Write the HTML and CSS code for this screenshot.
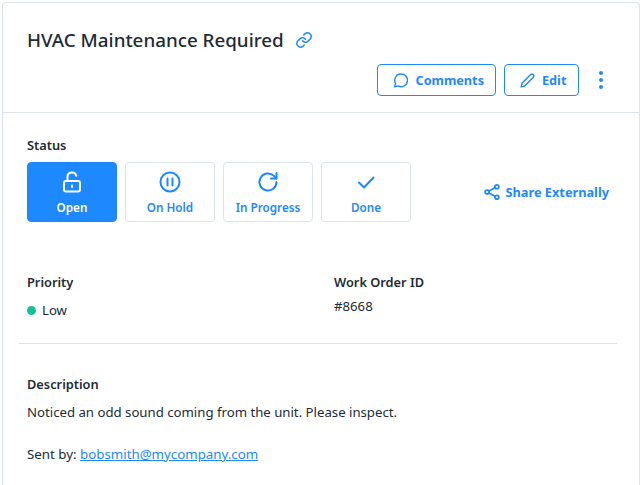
FILE: index.html
```html
<!DOCTYPE html>
<html lang="en">
<head>
<meta charset="utf-8">
<title>Work Order</title>
<link rel="stylesheet" href="styles.css">
</head>
<body>
<main class="card">
  <header class="head">
    <div class="title-row">
      <h1 class="title">HVAC Maintenance Required</h1>
      <svg class="link-icon" viewBox="0 0 24 24" width="18" height="18" fill="none" stroke="currentColor" stroke-width="2" stroke-linecap="round" stroke-linejoin="round"><path d="M10 13a5 5 0 0 0 7.5.5l3-3a5 5 0 0 0-7-7l-1.7 1.7"/><path d="M14 11a5 5 0 0 0-7.5-.5l-3 3a5 5 0 0 0 7 7l1.7-1.7"/></svg>
    </div>
    <div class="actions">
      <button class="btn"><svg viewBox="0 0 24 24" width="17" height="17" fill="none" stroke="currentColor" stroke-width="2" stroke-linecap="round" stroke-linejoin="round"><path d="M3.5 21l1.6-4.6A9 9 0 1 1 8.4 19.6z"/></svg>Comments</button>
      <button class="btn btn-edit"><svg viewBox="0 0 24 24" width="17" height="17" fill="none" stroke="currentColor" stroke-width="2" stroke-linecap="round" stroke-linejoin="round"><path d="M3 21l1.2-5L16.5 3.7a2.6 2.6 0 0 1 3.8 3.8L8 19.8z"/></svg>Edit</button>
      <button class="more" aria-label="More"><span></span><span></span><span></span></button>
    </div>
  </header>
  <section class="body">
    <div class="label">Status</div>
    <div class="status-row">
      <div class="statuses">
        <button class="status active"><svg viewBox="0 0 24 24" width="24" height="24" fill="none" stroke="currentColor" stroke-width="2" stroke-linecap="round" stroke-linejoin="round"><rect x="4" y="11" width="16" height="10.5" rx="2"/><path d="M7.5 11V7a4.5 4.5 0 0 1 8.8-1.3"/><path d="M12 15.5v1.5"/></svg>Open</button>
        <button class="status"><svg viewBox="0 0 24 24" width="24" height="24" fill="none" stroke="currentColor" stroke-width="2" stroke-linecap="round"><circle cx="12" cy="12" r="9.5"/><path d="M9.5 8.5v7M14.5 8.5v7"/></svg>On Hold</button>
        <button class="status"><svg viewBox="0 0 24 24" width="24" height="24" fill="none" stroke="currentColor" stroke-width="2" stroke-linecap="round" stroke-linejoin="round"><path d="M20.5 12a8.5 8.5 0 1 1-2.6-6.1L20.5 8.5"/><path d="M20.5 3v5.5H15"/></svg>In Progress</button>
        <button class="status"><svg viewBox="0 0 24 24" width="24" height="24" fill="none" stroke="currentColor" stroke-width="2" stroke-linecap="round" stroke-linejoin="round"><path d="M5 12.5l5 5L19.5 7.5"/></svg>Done</button>
      </div>
      <a class="share"><svg viewBox="0 0 24 24" width="18" height="18" fill="none" stroke="currentColor" stroke-width="2.3"><circle cx="18.5" cy="5" r="2.6"/><circle cx="5.5" cy="12" r="2.6"/><circle cx="18.5" cy="19" r="2.6"/><path d="M8 10.7l8.2-4.4M8 13.3l8.2 4.4"/></svg>Share Externally</a>
    </div>
    <div class="meta">
      <div class="meta-col">
        <div class="label">Priority</div>
        <div class="priority"><span class="dot"></span>Low</div>
      </div>
      <div class="meta-col">
        <div class="label">Work Order ID</div>
        <div class="value">#8668</div>
      </div>
    </div>
  </section>
  <hr class="rule">
  <section class="desc">
    <div class="label">Description</div>
    <p class="text">Noticed an odd sound coming from the unit. Please inspect.</p>
    <p class="text sent">Sent by: <a class="mail" href="#">bobsmith@mycompany.com</a></p>
  </section>
</main>
</body>
</html>
```
FILE: styles.css
```css
* { box-sizing: border-box; }
html, body { margin: 0; padding: 0; background: #fff; }
body {
  padding: 2px 3px 0 2px;
  height: 485px;
  overflow: hidden;
  font-family: "Noto Sans", "Open Sans", sans-serif;
  font-size: 13.2px;
  color: #212b36;
}
button { font-family: inherit; cursor: pointer; }
.card {
  border: 1px solid #dce3ea;
  border-bottom: 0;
  border-radius: 4px 4px 0 0;
  height: 483px;
}
.head {
  height: 110px;
  padding: 23px 24px 0;
  border-bottom: 1px solid #dce3ea;
}
.title-row { display: flex; align-items: center; gap: 11px; height: 28px; }
.title { margin: 0; font-size: 18.8px; font-weight: 500; line-height: 28px; color: #212b36; }
.link-icon { color: #1e88ff; }
.actions { display: flex; justify-content: flex-end; align-items: center; gap: 8px; margin-top: 10px; margin-right: 8px; }
.btn {
  display: flex; align-items: center; justify-content: flex-start; gap: 6px;
  height: 32px; padding: 0 11px 0 14px;
  background: #fff; border: 1px solid #1e88ff; border-radius: 4px;
  color: #1e88ff; font-size: 12.7px; font-weight: 700;
}
.btn-edit { width: 75px; }
.more { display: flex; flex-direction: column; gap: 3px; margin-left: 8px; padding: 0 4px; background: none; border: 0; }
.more span { width: 4px; height: 4px; border-radius: 50%; background: #1e88ff; }
.body { padding: 23px 24px 0; }
.label { font-size: 12.8px; font-weight: 600; line-height: 18px; color: #212b36; }
.status-row { display: flex; align-items: center; justify-content: space-between; margin-top: 8px; padding-right: 6px; }
.statuses { display: flex; gap: 8px; }
.status {
  display: flex; flex-direction: column; align-items: center; justify-content: center; gap: 5px;
  width: 90px; height: 60px; padding: 0;
  background: #fff; border: 1px solid #dce3ea; border-radius: 4px;
  color: #1e88ff; font-size: 11.7px; font-weight: 600; line-height: 16px;
}
.status.active { background: #1e88ff; border-color: #1e88ff; color: #fff; }
.share { display: flex; align-items: center; gap: 5px; color: #1e88ff; font-size: 12.75px; font-weight: 700; }
.meta { display: grid; grid-template-columns: 307px 1fr; margin-top: 51px; height: 70px; }
.priority { display: flex; align-items: center; gap: 6px; margin-top: 10px; line-height: 18px; }
.dot { width: 9px; height: 9px; border-radius: 50%; background: #13c296; }
.value { margin-top: 6px; line-height: 18px; }
.rule { margin: 0 22px 0 16px; border: 0; border-top: 1px solid #dce3ea; }
.desc { padding: 31px 24px 0; }
.text { margin: 10px 0 0; line-height: 18px; }
.sent { margin-top: 24px; font-size: 13.3px; }
.mail { color: #1e88ff; text-decoration: underline; }
```
